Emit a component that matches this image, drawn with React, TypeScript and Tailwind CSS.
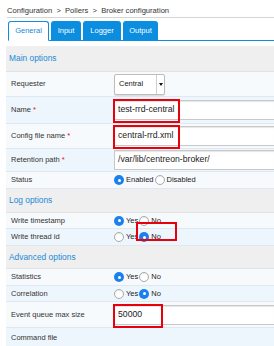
import React from "react";

type Radio = { label: string; on: boolean };

function RadioDot({ on }: { on: boolean }) {
  return on ? (
    <span className="w-[10px] h-[10px] rounded-full bg-[#1a80ee] flex items-center justify-center shrink-0">
      <span className="w-[3px] h-[3px] rounded-full bg-white"></span>
    </span>
  ) : (
    <span className="w-[10px] h-[10px] rounded-full bg-white border border-[#a9a9a9] shadow-[inset_0_1px_1px_rgba(0,0,0,0.08)] shrink-0"></span>
  );
}

function Radios({ items }: { items: Radio[] }) {
  return (
    <div className="flex items-center text-[7.5px] text-[#222]">
      {items.map((r, i) => (
        <span key={i} className="flex items-center gap-[2px] mr-[1px]">
          <RadioDot on={r.on} />
          <span>{r.label}</span>
        </span>
      ))}
    </div>
  );
}

function Header({ title, h }: { title: string; h: string }) {
  return (
    <div className={`${h} bg-[#efefef] flex items-center pl-[3px] text-[8.4px] text-[#1d8ad6] border-b border-[#e2e2e2]`}>
      {title}
    </div>
  );
}

function Row({ label, req, h, alt, children }: { label: string; req?: boolean; h: string; alt?: boolean; children?: React.ReactNode }) {
  return (
    <div className={`${h} flex items-center border-b border-[#e1e7ee] ${alt ? "bg-[#eef6fd]" : "bg-[#f6fafd]"}`}>
      <div className="w-[108px] pl-[5px] text-[7.5px] text-[#333] shrink-0">
        {label}
        {req && <span className="text-[#e0101a] ml-[2px]">*</span>}
      </div>
      <div className="flex-1 flex items-center relative">{children}</div>
    </div>
  );
}

function Field({ value, mark }: { value: string; mark?: string }) {
  return (
    <div className="relative flex-1 h-[20px] bg-white border border-[#c8c8c8] border-r-0 shadow-[inset_0_1px_1px_rgba(0,0,0,0.1)] flex items-center pl-[3px] text-[8.7px] text-[#222]">
      {value}
      {mark && <div className={`absolute -left-[2px] -top-[2px] h-[24px] ${mark} border-2 border-[#e8000b]`}></div>}
    </div>
  );
}

export default function App() {
  return (
    <div className="w-[274px] h-[346px] overflow-hidden bg-white font-['Liberation_Sans',Arial,sans-serif]">
      {/* breadcrumb */}
      <div className="h-[18px] ml-[7px] pt-[6px] border-b border-[#d4d4d4] text-[7.6px] text-[#333] leading-[9px]">
        Configuration &nbsp;&gt;&nbsp; Pollers &nbsp;&gt;&nbsp; Broker configuration
      </div>

      {/* tabs */}
      <div className="mt-[3px] ml-[8px] flex items-end gap-[2px] border-b border-[#0b8de0] h-[20px]">
        <div className="h-[20px] w-[41px] -mb-[1px] bg-white border border-[#0b8de0] border-b-white rounded-t-[3px] flex items-center justify-center text-[7.5px] text-[#1a8ad8]">General</div>
        <div className="h-[19px] w-[30px] bg-[#0b8de0] rounded-t-[3px] flex items-center justify-center text-[7.5px] text-white">Input</div>
        <div className="h-[19px] w-[38px] bg-[#0b8de0] rounded-t-[3px] flex items-center justify-center text-[7.5px] text-white">Logger</div>
        <div className="h-[19px] w-[35px] bg-[#0b8de0] rounded-t-[3px] flex items-center justify-center text-[7.5px] text-white">Output</div>
      </div>

      {/* form */}
      <div className="ml-[6px] mt-[5px]">
        <Header title="Main options" h="h-[26px]" />
        <Row label="Requester" h="h-[25px]">
          <div className="h-[21px] w-[51px] bg-white border border-[#bdbdbd] rounded-[2px] shadow-[0_1px_1px_rgba(0,0,0,0.12)] flex items-center text-[7.5px] text-[#222]">
            <span className="flex-1 pl-[4px]">Central</span>
            <span className="w-[8px] h-full border-l border-[#cfcfcf] flex items-center justify-center">
              <span className="w-0 h-0 border-l-[2.5px] border-r-[2.5px] border-t-[3px] border-l-transparent border-r-transparent border-t-[#111]"></span>
            </span>
          </div>
        </Row>
        <Row label="Name" req h="h-[27px]" alt>
          <Field value="test-rrd-central" mark="w-[67px]" />
        </Row>
        <Row label="Config file name" req h="h-[25px]">
          <Field value="central-rrd.xml" mark="w-[67px]" />
        </Row>
        <Row label="Retention path" req h="h-[23px]" alt>
          <Field value="/var/lib/centreon-broker/" />
        </Row>
        <Row label="Status" h="h-[17px]">
          <Radios items={[{ label: "Enabled", on: true }, { label: "Disabled", on: false }]} />
        </Row>

        <Header title="Log options" h="h-[24px]" />
        <Row label="Write timestamp" h="h-[16px]">
          <Radios items={[{ label: "Yes", on: true }, { label: "No", on: false }]} />
        </Row>
        <Row label="Write thread id" h="h-[17px]" alt>
          <Radios items={[{ label: "Yes", on: false }, { label: "No", on: true }]} />
          <div className="absolute left-[22px] -top-[9px] w-[41px] h-[19px] border-2 border-[#e8000b]"></div>
        </Row>

        <Header title="Advanced options" h="h-[23px]" />
        <Row label="Statistics" h="h-[17px]">
          <Radios items={[{ label: "Yes", on: true }, { label: "No", on: false }]} />
        </Row>
        <Row label="Correlation" h="h-[16px]" alt>
          <Radios items={[{ label: "Yes", on: false }, { label: "No", on: true }]} />
        </Row>
        <Row label="Event queue max size" h="h-[26px]">
          <Field value="50000" mark="w-[50px]" />
        </Row>
        <Row label="Command file" h="h-[20px]" alt />
      </div>
    </div>
  );
}
